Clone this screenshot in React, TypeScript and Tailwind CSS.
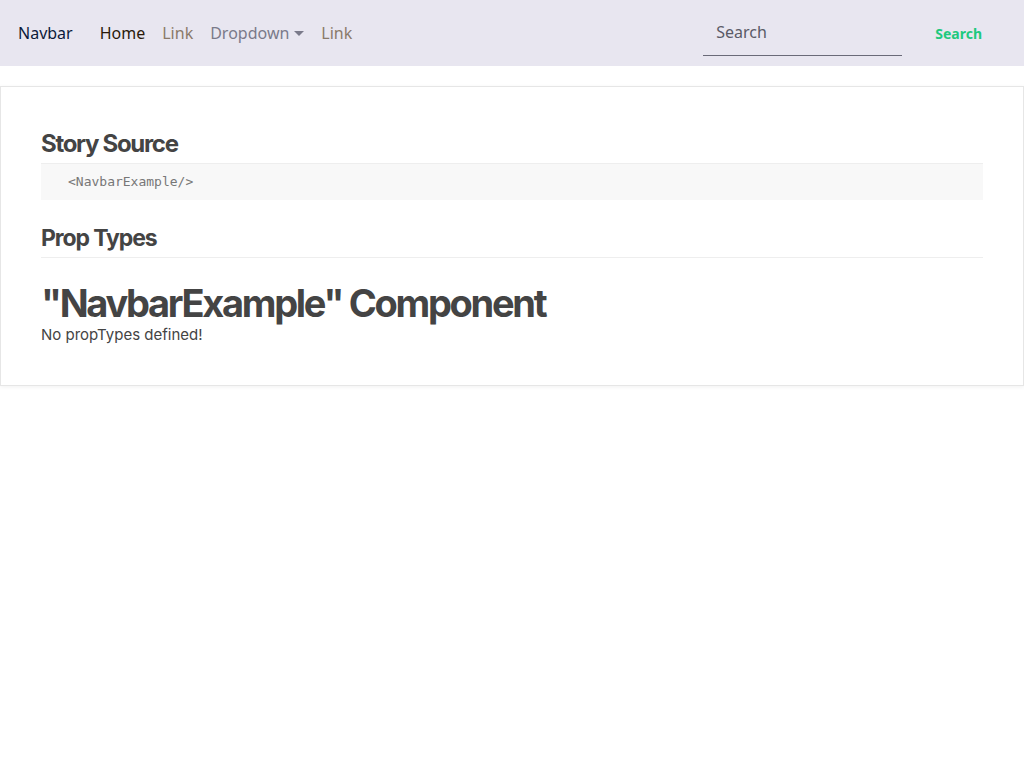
export default function App() {
  return (
    <div className="min-h-screen bg-white">
      <nav className="flex h-[66px] items-center bg-[#e8e6f0] px-[18px] font-['Noto_Sans',sans-serif] text-[16px]">
        <a className="mr-[27px] text-[#0b1a3a]">Navbar</a>
        <ul className="flex items-center gap-[17px]">
          <li className="text-[#2a1a0a]">Home</li>
          <li className="text-[#8a7a6a]">Link</li>
          <li className="flex items-center text-[#7a7a8a]">
            Dropdown
            <span className="ml-[5px] inline-block h-0 w-0 border-x-[5px] border-t-[5px] border-x-transparent border-t-[#7a7a8a]" />
          </li>
          <li className="text-[#8a7a6a]">Link</li>
        </ul>
        <div className="ml-auto flex items-center">
          <div className="mt-[-1px] flex h-[46px] w-[199px] items-center border-b border-[#6a6a78] pl-[13px] text-[#5a5a66]">
            Search
          </div>
          <button className="ml-[33px] mr-[24px] text-[14px] font-bold text-[#1ec97e]">Search</button>
        </div>
      </nav>

      <div className="mt-[20px] border border-[#e6e6e6] px-[40px] pb-[40px] pt-[42px] shadow-[0_1px_4px_rgba(0,0,0,0.06)] font-['Inter',sans-serif] text-[#444]">
        <h2 className="border-b border-[#eee] pb-[4px] text-[24px] font-bold leading-[30px] tracking-[-1.3px]">Story Source</h2>
        <pre className="bg-[#f8f8f8] px-[27px] py-[10px] font-['DejaVu_Sans_Mono',monospace] text-[13px] leading-[16px] text-[#777]">{'<NavbarExample/>'}</pre>
        <h2 className="mt-[24px] border-b border-[#eee] pb-[4px] text-[23px] font-bold leading-[29px] tracking-[-1.1px]">Prop Types</h2>
        <h1 className="mt-[23px] text-[38px] font-bold leading-[44px] tracking-[-2.3px]">"NavbarExample" Component</h1>
        <p className="text-[15px] leading-[20px] text-[#444]">No propTypes defined!</p>
      </div>
    </div>
  );
}
